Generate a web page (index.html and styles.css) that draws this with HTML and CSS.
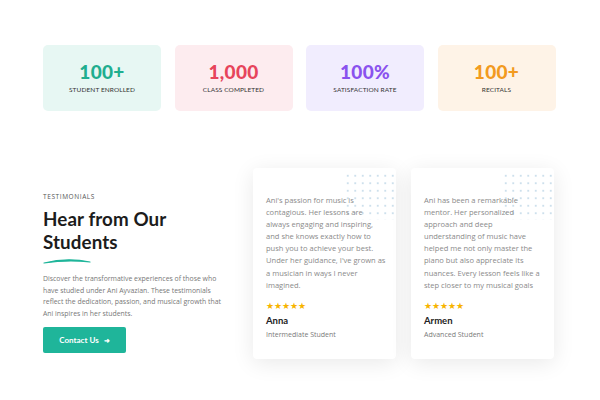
FILE: index.html
```html
<!DOCTYPE html>
<html>
<head>
<meta charset="utf-8">
<link rel="stylesheet" href="styles.css">
</head>
<body>
<div class="page">
  <section class="stats">
    <div class="stat teal"><div class="num">100+</div><div class="lbl">STUDENT ENROLLED</div></div>
    <div class="stat red"><div class="num">1,000</div><div class="lbl">CLASS COMPLETED</div></div>
    <div class="stat purple"><div class="num">100%</div><div class="lbl">SATISFACTION RATE</div></div>
    <div class="stat orange"><div class="num">100+</div><div class="lbl">RECITALS</div></div>
  </section>
  <section class="testi">
    <div class="intro">
      <div class="eyebrow">TESTIMONIALS</div>
      <h2 class="title">Hear from Our<br>Students</h2>
      <svg class="swoosh" width="48" height="6" viewBox="0 0 48 6"><path d="M1 5 Q24 -1 47 4 Q24 1.5 1 5 Z" fill="#1fb59a" stroke="#1fb59a" stroke-width="1.2" stroke-linejoin="round"/></svg>
      <p class="desc">Discover the transformative experiences of those who have studied under Ani Ayvazian. These testimonials reflect the dedication, passion, and musical growth that Ani inspires in her students.</p>
      <a class="btn">Contact Us <span class="arrow">&#10140;</span></a>
    </div>
    <div class="cards">
      <div class="card">
        <div class="dots"></div>
        <p class="quote">Ani's passion for music is contagious. Her lessons are always engaging and inspiring, and she knows exactly how to push you to achieve your best. Under her guidance, I've grown as a musician in ways I never imagined.</p>
        <div class="stars">★★★★★</div>
        <div class="name">Anna</div>
        <div class="role">Intermediate Student</div>
      </div>
      <div class="card">
        <div class="dots"></div>
        <p class="quote">Ani has been a remarkable mentor. Her personalized approach and deep understanding of music have helped me not only master the piano but also appreciate its nuances. Every lesson feels like a step closer to my musical goals</p>
        <div class="stars">★★★★★</div>
        <div class="name">Armen</div>
        <div class="role">Advanced Student</div>
      </div>
    </div>
  </section>
</div>
</body>
</html>
```
FILE: styles.css
```css
* { box-sizing: border-box; }
html, body { margin: 0; padding: 0; background: #fff; }
body { width: 600px; height: 400px; overflow: hidden; font-family: "Open Sans", sans-serif; }
.page { padding: 45px 45px 0 43px; }
.stats { display: grid; grid-template-columns: repeat(4, 118px); column-gap: 13.5px; }
.stat { height: 66px; border-radius: 5px; display: flex; flex-direction: column; align-items: center; justify-content: center; }
.num { font-family: "Lato", sans-serif; font-weight: 900; font-size: 19px; line-height: 20px; letter-spacing: 0.3px; margin-top: -2px; }
.lbl { font-family: "Lato", sans-serif; font-size: 6.5px; color: #333; margin-top: 4px; letter-spacing: 0.1px; }
.teal { background: #e7f7f3; } .teal .num { color: #1fae8f; }
.red { background: #fdecef; } .red .num { color: #e7445b; }
.purple { background: #f1edfe; } .purple .num { color: #8a52ee; }
.orange { background: #fef3e7; } .orange .num { color: #f29a20; }
.testi { display: flex; margin-top: 57px; }
.intro { width: 210px; padding-top: 24px; }
.eyebrow { font-size: 6.5px; letter-spacing: 0.6px; color: #555; }
.title { font-family: "Lato", sans-serif; font-weight: 700; font-size: 18.8px; line-height: 23px; color: #1c1c1c; margin: 6px 0 0; letter-spacing: 0.1px; }
.swoosh { display: block; margin-top: 5px; }
.desc { width: 185px; font-size: 6.9px; line-height: 11.5px; color: #777; margin: 9px 0 0; }
.btn { display: inline-flex; align-items: center; justify-content: center; gap: 5px; width: 83px; height: 26px; margin-top: 8px; background: #1fb59a; color: #fff; border-radius: 2px; font-family: "Lato", sans-serif; font-size: 8px; font-weight: 700; }
.arrow { font-size: 7px; }
.cards { display: flex; gap: 15px; }
.card { position: relative; width: 143px; height: 191px; background: #fff; border-radius: 4px; box-shadow: 0 4px 22px rgba(0,0,0,0.09); padding: 26px 10px 0 13px; }
.dots { position: absolute; top: 4px; right: 2px; width: 50px; height: 48px; background-image: radial-gradient(circle, #cde0ec 0.8px, transparent 1.2px); background-size: 7.5px 7.5px; }
.quote { position: relative; font-size: 7.55px; line-height: 12.1px; color: #8a8a8a; margin: 0; }
.stars { color: #f7b400; font-size: 8.5px; margin-top: 10px; line-height: 10px; }
.name { font-family: "Lato", sans-serif; font-weight: 700; font-size: 9.5px; color: #222; margin-top: 4px; }
.role { font-size: 7px; color: #7a7a7a; margin-top: 4px; }
```
